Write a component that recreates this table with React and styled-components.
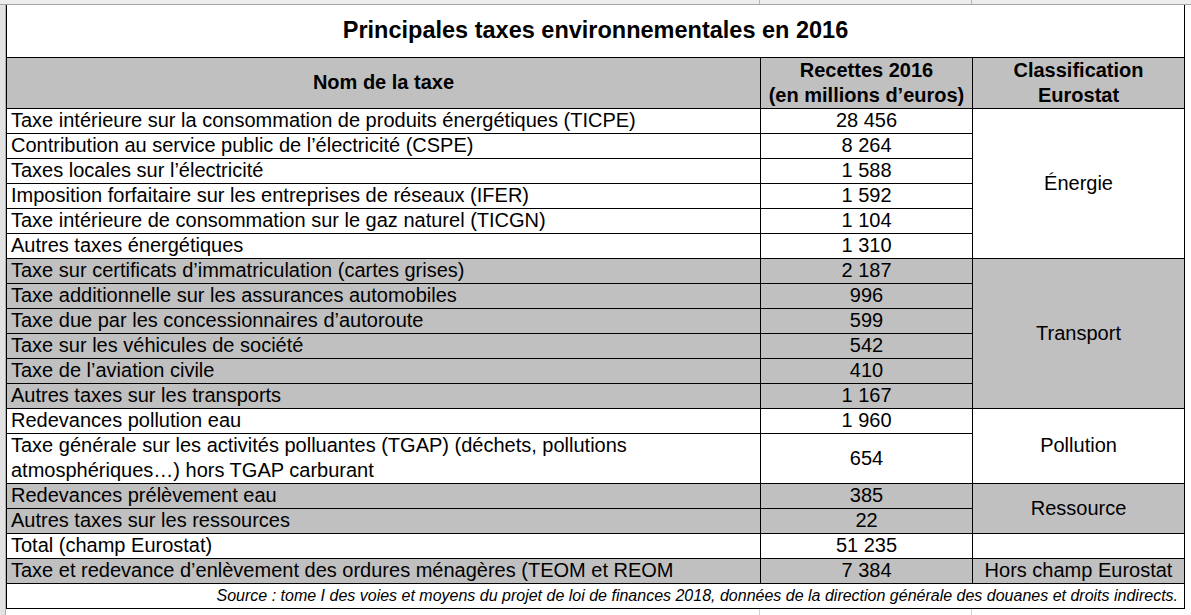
import styled, { createGlobalStyle } from "styled-components";

const GlobalStyle = createGlobalStyle`
  html, body {
    margin: 0;
    padding: 0;
    background: #fff;
  }
  body {
    font-family: "Liberation Sans", Arial, sans-serif;
    color: #000;
  }
`;

const groups = [
  {
    label: "Énergie",
    shaded: false,
    rows: [
      { name: ["Taxe intérieure sur la consommation de produits énergétiques (TICPE)"], value: "28 456" },
      { name: ["Contribution au service public de l’électricité (CSPE)"], value: "8 264" },
      { name: ["Taxes locales sur l’électricité"], value: "1 588" },
      { name: ["Imposition forfaitaire sur les entreprises de réseaux (IFER)"], value: "1 592" },
      { name: ["Taxe intérieure de consommation sur le gaz naturel (TICGN)"], value: "1 104" },
      { name: ["Autres taxes énergétiques"], value: "1 310" },
    ],
  },
  {
    label: "Transport",
    shaded: true,
    rows: [
      { name: ["Taxe sur certificats d’immatriculation (cartes grises)"], value: "2 187" },
      { name: ["Taxe additionnelle sur les assurances automobiles"], value: "996" },
      { name: ["Taxe due par les concessionnaires d’autoroute"], value: "599" },
      { name: ["Taxe sur les véhicules de société"], value: "542" },
      { name: ["Taxe de l’aviation civile"], value: "410" },
      { name: ["Autres taxes sur les transports"], value: "1 167" },
    ],
  },
  {
    label: "Pollution",
    shaded: false,
    rows: [
      { name: ["Redevances pollution eau"], value: "1 960" },
      {
        name: [
          "Taxe générale sur les activités polluantes (TGAP) (déchets, pollutions",
          "atmosphériques…) hors TGAP carburant",
        ],
        value: "654",
      },
    ],
  },
  {
    label: "Ressource",
    shaded: true,
    rows: [
      { name: ["Redevances prélèvement eau"], value: "385" },
      { name: ["Autres taxes sur les ressources"], value: "22" },
    ],
  },
  {
    label: "",
    shaded: false,
    rows: [{ name: ["Total (champ Eurostat)"], value: "51 235" }],
  },
  {
    label: "Hors champ Eurostat",
    shaded: true,
    rows: [
      { name: ["Taxe et redevance d’enlèvement des ordures ménagères (TEOM et REOM"], value: "7 384" },
    ],
  },
];

const App = () => (
  <>
    <GlobalStyle />
    <Sheet>
      <TopStrip />
      <Body>
        <Gutter />
        <Main>
          <Table>
            <colgroup>
              <col style={{ width: 754 }} />
              <col style={{ width: 212 }} />
              <col style={{ width: 212 }} />
            </colgroup>
            <tbody>
              <TitleRow>
                <TitleCell colSpan={3}>Principales taxes environnementales en 2016</TitleCell>
              </TitleRow>
              <HeadRow>
                <HeadCell>Nom de la taxe</HeadCell>
                <HeadCell>
                  Recettes 2016
                  <br />
                  (en millions d’euros)
                </HeadCell>
                <HeadCell>
                  Classification
                  <br />
                  Eurostat
                </HeadCell>
              </HeadRow>
              {groups.map((group) =>
                group.rows.map((row, i) => (
                  <Row key={row.name[0]} $lines={row.name.length}>
                    <NameCell $shaded={group.shaded}>
                      {row.name.map((line, j) => (
                        <Line key={j}>{line}</Line>
                      ))}
                    </NameCell>
                    <ValueCell $shaded={group.shaded}>{row.value}</ValueCell>
                    {i === 0 && (
                      <ClassCell $shaded={group.shaded} rowSpan={group.rows.length}>
                        {group.label}
                      </ClassCell>
                    )}
                  </Row>
                ))
              )}
              <Row $lines={1}>
                <SourceCell colSpan={3}>
                  Source : tome I des voies et moyens du projet de loi de finances 2018, données de la
                  direction générale des douanes et droits indirects.
                </SourceCell>
              </Row>
            </tbody>
          </Table>
          <GridTail />
        </Main>
      </Body>
    </Sheet>
  </>
);

const Sheet = styled.div`
  width: 1191px;
  height: 615px;
  overflow: hidden;
  display: flex;
  flex-direction: column;
`;

const TopStrip = styled.div`
  height: 4px;
  flex: none;
  background: linear-gradient(
      to right,
      transparent 759px,
      #b8b8b8 759px,
      #b8b8b8 760px,
      transparent 760px,
      transparent 971px,
      #b8b8b8 971px,
      #b8b8b8 972px,
      transparent 972px
    ),
    #ececec;
  border-bottom: 1px solid #a6a6a6;
`;

const Body = styled.div`
  flex: 1;
  display: flex;
`;

const Gutter = styled.div`
  width: 5px;
  flex: none;
  background: #e2e2e2;
  border-right: 1px solid #b0b0b0;
`;

const Main = styled.div`
  display: flex;
  flex-direction: column;
`;

const Table = styled.table`
  border-collapse: collapse;
  table-layout: fixed;
  width: 1178px;
  font-size: 20px;
  line-height: 23px;
`;

const TitleRow = styled.tr`
  height: 52px;
`;

const TitleCell = styled.td`
  border: 1px solid #000;
  border-top: none;
  background: #fff;
  text-align: center;
  font-weight: bold;
  font-size: 23.5px;
  padding: 0;
`;

const HeadRow = styled.tr`
  height: 51px;
`;

const HeadCell = styled.td`
  border: 1px solid #000;
  background: #c0c0c0;
  text-align: center;
  vertical-align: middle;
  font-weight: bold;
  line-height: 25px;
  padding: 0;
`;

const Row = styled.tr`
  height: ${(p) => p.$lines * 25}px;
`;

const Cell = styled.td`
  border: 1px solid #000;
  background: ${(p) => (p.$shaded ? "#c0c0c0" : "#fff")};
  padding: 0;
  vertical-align: middle;
  white-space: nowrap;
  overflow: hidden;
`;

const NameCell = styled(Cell)`
  padding-left: 4px;
`;

const Line = styled.div`
  & + & {
    margin-top: 2px;
  }
`;

const ValueCell = styled(Cell)`
  text-align: center;
`;

const ClassCell = styled(Cell)`
  text-align: center;
`;

const SourceCell = styled.td`
  border: 1px solid #000;
  background: #fff;
  text-align: right;
  font-style: italic;
  font-size: 16px;
  line-height: 22px;
  padding: 0 6px 0 0;
  white-space: nowrap;
`;

const GridTail = styled.div`
  height: 10px;
  background: linear-gradient(
    to right,
    transparent 753px,
    #d0d0d0 753px,
    #d0d0d0 754px,
    transparent 754px,
    transparent 965px,
    #d0d0d0 965px,
    #d0d0d0 966px,
    transparent 966px
  );
`;

export default App;
